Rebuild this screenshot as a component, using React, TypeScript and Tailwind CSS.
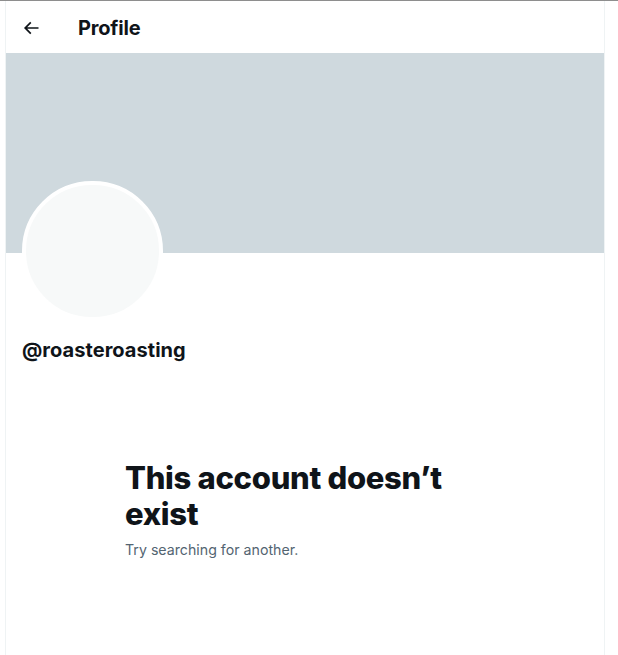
export default function App() {
  return (
    <div className="min-h-[655px] bg-white" style={{ fontFamily: 'Inter, "Noto Sans", sans-serif' }}>
      <div className="h-px bg-[#8e8e8e]" />
      <div className="ml-[5px] w-[600px] min-h-[654px] border-x border-[#eff3f4]">
        <div className="h-[52px] flex items-center px-4 pt-[2px]">
          <div className="w-[56px] flex items-center">
            <svg viewBox="0 0 24 24" width="20" height="20" className="-ml-[1px] text-[#0f1419]" fill="currentColor">
              <path d="M7.414 13l5.043 5.04-1.414 1.42L3.586 12l7.457-7.46 1.414 1.42L7.414 11H21v2H7.414z" />
            </svg>
          </div>
          <h2 className="text-[20px] leading-6 font-bold text-[#0f1419] tracking-[-0.2px]">Profile</h2>
        </div>
        <div className="h-[200px] bg-[#cfd9de]" />
        <div className="px-4">
          <div className="-mt-[72px] w-[141px] h-[140px] rounded-full border-4 border-white bg-[#f7f9f9]" />
          <div className="mt-[17px] text-[20px] leading-6 font-bold text-[#0f1419] tracking-[0.05px]">@roasteroasting</div>
        </div>
        <div className="mx-auto mt-[98px] w-[360px]">
          <div className="text-[31px] leading-[36px] font-extrabold text-[#0f1419] tracking-[-0.3px]">
            This account doesn’t exist
          </div>
          <div className="mt-2 text-[14.2px] leading-5 text-[#536471]">Try searching for another.</div>
        </div>
      </div>
    </div>
  );
}
